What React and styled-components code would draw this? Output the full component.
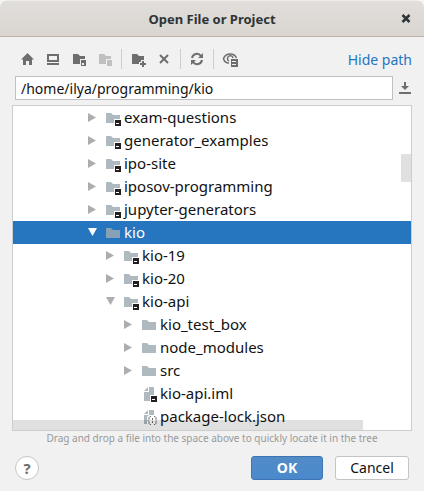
import React, { useState } from "react";
import styled, { createGlobalStyle, css } from "styled-components";

const GlobalStyle = createGlobalStyle`
  * { box-sizing: border-box; }
  body {
    margin: 0;
    background: #f6f6f6;
    font-family: "Noto Sans", "Open Sans", sans-serif;
    font-size: 14px;
    color: #111;
  }
  button, input { font: inherit; color: inherit; }
`;

const Dialog = styled.main`
  display: flex;
  flex-direction: column;
  min-height: 100vh;
  background: #f1f1f1;
  border-radius: 8px 8px 0 0;
  overflow: hidden;
`;

const TitleBar = styled.header`
  display: grid;
  grid-template-columns: 24px 1fr 24px;
  align-items: center;
  height: 37px;
  padding: 0 6px;
  background: linear-gradient(#e1dedb, #d9d5d0);
  border-top: 1px solid #eeedeb;
  border-bottom: 1px solid #bfb4aa;
`;

const Title = styled.h1`
  grid-column: 2;
  margin: 0;
  font-size: 13px;
  font-weight: 700;
  text-align: center;
  white-space: nowrap;
  color: #2e3436;
`;

const IconButton = styled.button`
  display: flex;
  align-items: center;
  justify-content: center;
  flex: none;
  width: 24px;
  height: 24px;
  padding: 0;
  border: 0;
  background: none;
  color: #6e6e6e;
  &:disabled { color: #c0c0c0; }
`;

const CloseButton = styled(IconButton)`
  color: #2e3436;
`;

const Toolbar = styled.div`
  display: flex;
  align-items: center;
  gap: 2px;
  height: 39px;
  padding: 5px 12px 0 15px;
`;

const Separator = styled.span`
  width: 1px;
  height: 20px;
  margin: 0 2px;
  background: #cdcdcd;
`;

const PathLink = styled.a`
  margin-left: auto;
  color: #2675bf;
  text-decoration: none;
  white-space: nowrap;
`;

const PathRow = styled.div`
  display: flex;
  align-items: center;
  padding: 0 7px 0 15px;
`;

const PathInput = styled.input`
  flex: 1;
  min-width: 0;
  height: 24px;
  padding: 0 5px;
  border: 1px solid #c0c0c0;
  border-radius: 0;
  background: #fff;
  outline: 0;
`;

const TreePanel = styled.div`
  position: relative;
  margin: 5px 12px 0;
  border: 1px solid #cdcdcd;
  background: #fff;
`;

const TreeList = styled.ul`
  margin: 0;
  padding: 0 0 2px;
  list-style: none;
`;

const TreeRow = styled.li`
  display: flex;
  align-items: center;
  height: 23px;
  padding-left: ${(p) => 72 + p.$level * 18}px;
  color: ${(p) => (p.$selected ? "#fff" : "inherit")};
  background: ${(p) => (p.$selected ? "#2675bf" : "none")};
  font-size: 15px;
  white-space: nowrap;
`;

const Toggle = styled.span`
  display: flex;
  width: 14px;
  height: 15px;
  margin-right: 6px;
  color: ${(p) => (p.$selected ? "#fff" : "#adadad")};
`;

const NodeIconSlot = styled.span`
  display: flex;
  align-items: flex-end;
  height: 17px;
`;

const NodeName = styled.span`
  margin-left: 3px;
  line-height: 23px;
`;

const thumb = css`
  position: absolute;
  background: rgba(0, 0, 0, 0.12);
`;

const VerticalThumb = styled.span`
  ${thumb}
  top: 48px;
  right: 0;
  width: 10px;
  height: 28px;
`;

const HorizontalThumb = styled.span`
  ${thumb}
  left: 0;
  right: 48px;
  bottom: 0;
  height: 10px;
`;

const Hint = styled.p`
  margin: 0;
  font-size: 10px;
  line-height: 15px;
  text-align: center;
  white-space: nowrap;
  color: #999;
`;

const Footer = styled.footer`
  display: flex;
  align-items: center;
  gap: 12px;
  padding: 10px 15px;
`;

const HelpButton = styled.button`
  width: 24px;
  height: 24px;
  margin-right: auto;
  padding: 0;
  border: 1px solid #c4c4c4;
  border-radius: 50%;
  background: #fff;
  color: #6e6e6e;
  font-size: 15px;
  font-weight: 700;
  line-height: 22px;
`;

const ActionButton = styled.button`
  min-width: ${(p) => (p.$primary ? 72 : 74)}px;
  height: 24px;
  padding: 0 12px;
  border: 1px solid ${(p) => (p.$primary ? "#3d75b3" : "#c4c4c4")};
  border-radius: 3px;
  background: ${(p) => (p.$primary ? "linear-gradient(#528cc7, #4989cc)" : "#fff")};
  color: ${(p) => (p.$primary ? "#fff" : "#111")};
  font-weight: ${(p) => (p.$primary ? 700 : 400)};
  line-height: 20px;
`;

const Icon = ({ children }) => (
  <svg width="16" height="16" viewBox="0 0 16 16" fill="currentColor" aria-hidden="true">
    {children}
  </svg>
);

const HomeIcon = () => (
  <Icon><path d="M8.500 2 2 8.500h2V14h3v-4h3v4h3V8.500h2Z" /></Icon>
);
const DesktopIcon = () => (
  <Icon>
    <path fillRule="evenodd" d="M2 3h12v8H2ZM4 5v4h8V5Z" />
    <path d="M2 12h12v2H2Z" />
  </Icon>
);
const ProjectDirIcon = () => (
  <Icon>
    <path d="M2 3h5l2 2h5v3H9v5H2Z" />
    <path fillRule="evenodd" d="M10 9h5v6h-5ZM11 12v2h2v-2Z" />
  </Icon>
);
const ModuleDirIcon = () => (
  <Icon>
    <path d="M2 3h5l2 2h5v3H9v5H2Z" />
    <path d="M10 9h5v6h-5Z" />
  </Icon>
);
const NewFolderIcon = () => (
  <Icon>
    <path d="M2 3h5l2 2h5v4h-3v2H9v2H2Z" />
    <path d="M12 10h2v2h2v2h-2v2h-2v-2h-2v-2h2Z" />
  </Icon>
);
const DeleteIcon = () => (
  <Icon><path d="m4 4 8 8M12 4l-8 8" stroke="currentColor" strokeWidth="2" /></Icon>
);
const RefreshIcon = () => (
  <Icon>
    <path d="M3 7a5 5 0 0 1 9-2M13 9a5 5 0 0 1-9 2" fill="none" stroke="currentColor" strokeWidth="2" />
    <path d="M14 2v5H9ZM2 14V9h5Z" />
  </Icon>
);
const ShowHiddenIcon = () => (
  <Icon>
    <path d="M7 12C4 12 2 10 1.500 7.500 2.500 5 5 3 8 3s5.500 1.500 6.500 4" fill="none" stroke="currentColor" strokeWidth="1.500" />
    <path d="M7 10A2.800 2.800 0 1 1 11 7" fill="none" stroke="currentColor" strokeWidth="1.500" />
    <path fillRule="evenodd" d="M9 8h7v8H9ZM10 10v1h4v-1ZM10 13v1h4v-1Z" />
  </Icon>
);
const HistoryIcon = () => (
  <Icon><path d="M7 2h2v4h3L8 10 4 6h3ZM2 12h12v2H2Z" /></Icon>
);
const CloseIcon = () => (
  <Icon><path d="m4.500 4 7 7M11.500 4l-7 7" stroke="currentColor" strokeWidth="2.500" /></Icon>
);

const OverlaySquare = () => (
  <path fill="#231f20" fillRule="evenodd" d="M10 10h6v6h-6ZM11 13v1h3v-1Z" />
);

const NodeIcon = ({ kind, selected }) => (
  <Icon>
    {kind === "folder" && <path fill={selected ? "#87a0b5" : "#aeb9c0"} d="M1 3h5l2 2h7v8H1Z" />}
    {kind === "module" && <path fill="#aeb9c0" d="M1 3h5l2 2h7v4H9v4H1Z" />}
    {kind === "iml" && <path fill="#aeb9c0" d="M8 1h5v8H9v6H3V6h5ZM7 1v4H3Z" />}
    {kind === "json" && (
      <>
        <path fill="#aeb9c0" d="M8 1h5v5H8L6 8v7H3V6h5ZM7 1v4H3Z" />
        <path
          d="M10 7.500H9l-1 1v2L7 11.500l1 1v2l1 1h1M13 7.500h1l1 1v2l1 1-1 1v2l-1 1h-1M11.500 9v2M11.500 12v2"
          fill="none"
          stroke="#6e6e6e"
        />
      </>
    )}
    {(kind === "module" || kind === "iml") && <OverlaySquare />}
  </Icon>
);

const ToggleIcon = ({ state }) => (
  <svg width="14" height="14" viewBox="0 0 14 14" fill="currentColor" aria-hidden="true">
    {state === "closed" && <path d="M3 3 11 7.500 3 12Z" />}
    {state === "open" && <path d="M3 3h9L7.500 11Z" />}
  </svg>
);

const nodes = [
  { name: "exam-questions", level: 0, kind: "module", state: "closed" },
  { name: "generator_examples", level: 0, kind: "module", state: "closed" },
  { name: "ipo-site", level: 0, kind: "module", state: "closed" },
  { name: "iposov-programming", level: 0, kind: "module", state: "closed" },
  { name: "jupyter-generators", level: 0, kind: "module", state: "closed" },
  { name: "kio", level: 0, kind: "folder", state: "open" },
  { name: "kio-19", level: 1, kind: "module", state: "closed" },
  { name: "kio-20", level: 1, kind: "module", state: "closed" },
  { name: "kio-api", level: 1, kind: "module", state: "open" },
  { name: "kio_test_box", level: 2, kind: "folder", state: "closed" },
  { name: "node_modules", level: 2, kind: "folder", state: "closed" },
  { name: "src", level: 2, kind: "folder", state: "closed" },
  { name: "kio-api.iml", level: 2, kind: "iml" },
  { name: "package-lock.json", level: 2, kind: "json" },
];

export default function App() {
  const [path, setPath] = useState("/home/ilya/programming/kio");
  const [selected, setSelected] = useState("kio");

  return (
    <>
      <GlobalStyle />
      <Dialog>
        <TitleBar>
          <Title>Open File or Project</Title>
          <CloseButton aria-label="Close"><CloseIcon /></CloseButton>
        </TitleBar>
        <Toolbar>
          <IconButton aria-label="Home directory"><HomeIcon /></IconButton>
          <IconButton aria-label="Desktop directory"><DesktopIcon /></IconButton>
          <IconButton aria-label="Project directory"><ProjectDirIcon /></IconButton>
          <IconButton aria-label="Module directory" disabled><ModuleDirIcon /></IconButton>
          <Separator />
          <IconButton aria-label="New folder"><NewFolderIcon /></IconButton>
          <IconButton aria-label="Delete"><DeleteIcon /></IconButton>
          <Separator />
          <IconButton aria-label="Refresh"><RefreshIcon /></IconButton>
          <Separator />
          <IconButton aria-label="Show hidden files"><ShowHiddenIcon /></IconButton>
          <PathLink href="#path">Hide path</PathLink>
        </Toolbar>
        <PathRow>
          <PathInput id="path" aria-label="Path" value={path} onChange={(e) => setPath(e.target.value)} />
          <IconButton aria-label="Recent paths"><HistoryIcon /></IconButton>
        </PathRow>
        <TreePanel>
          <TreeList role="tree" aria-label="Files">
            {nodes.map((n) => {
              const active = n.name === selected;
              return (
                <TreeRow
                  key={n.name}
                  role="treeitem"
                  aria-level={n.level + 1}
                  aria-selected={active}
                  aria-expanded={n.state ? n.state === "open" : undefined}
                  $level={n.level}
                  $selected={active}
                  onClick={() => setSelected(n.name)}
                >
                  <Toggle $selected={active}><ToggleIcon state={n.state} /></Toggle>
                  <NodeIconSlot><NodeIcon kind={n.kind} selected={active} /></NodeIconSlot>
                  <NodeName>{n.name}</NodeName>
                </TreeRow>
              );
            })}
          </TreeList>
          <VerticalThumb />
          <HorizontalThumb />
        </TreePanel>
        <Hint>Drag and drop a file into the space above to quickly locate it in the tree</Hint>
        <Footer>
          <HelpButton aria-label="Help">?</HelpButton>
          <ActionButton $primary>OK</ActionButton>
          <ActionButton>Cancel</ActionButton>
        </Footer>
      </Dialog>
    </>
  );
}
